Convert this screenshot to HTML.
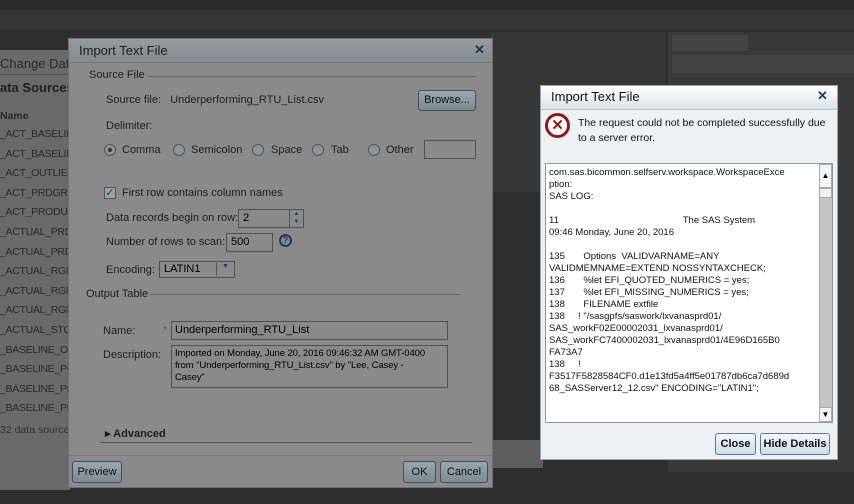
<!DOCTYPE html>
<html><head><style>
*{box-sizing:border-box;margin:0;padding:0}
body{width:854px;height:504px;overflow:hidden;background:#2e2e2e;font-family:"Liberation Sans",sans-serif;position:relative}
.a{position:absolute}
.t{font-size:11px;color:#1e1e1e;white-space:nowrap}
.lt{font-size:10.5px;color:#2a2a2a;white-space:nowrap}
.btn{position:absolute;border:1px solid #3f4f5c;border-radius:3px;background:linear-gradient(#9aa6ae,#7f8b93);font-size:11px;color:#111;text-align:center}
.wbtn{position:absolute;border:1px solid #5d7a94;border-radius:3px;background:linear-gradient(#f4f8fb,#cfdbe5);font-size:11px;font-weight:bold;color:#111;text-align:center}
.radio{position:absolute;width:12px;height:12px;border-radius:50%;border:1px solid #555;background:#8e9499}
.inp{position:absolute;border:1px solid #505050;background:#8a8a8a}
.log{font-size:9.5px;line-height:12px;color:#111;white-space:pre}
</style></head><body>
<div class="a" style="left:0;top:0;width:854px;height:10px;background:#2a2a2a"></div>
<div class="a" style="left:0;top:10px;width:854px;height:20px;background:#353535"></div>
<div class="a" style="left:490px;top:32px;width:175px;height:160px;background:#363636"></div>
<div class="a" style="left:668px;top:32px;width:186px;height:440px;background:#393939"></div>
<div class="a" style="left:672px;top:35px;width:76px;height:16px;background:#444"></div>
<div class="a" style="left:672px;top:55px;width:182px;height:18px;background:#444"></div>
<div class="a" style="left:0;top:50px;width:70px;height:440px;background:#6a6a6a"></div>
<div class="a lt" style="left:0;top:56px;font-size:13px;color:#2a2a2a">Change Data</div>
<div class="a" style="left:0;top:74px;width:70px;height:1px;background:#555"></div>
<div class="a lt" style="left:0;top:80px;font-size:13px;font-weight:bold;color:#222">ata Sources</div>
<div class="a lt" style="left:0;top:110px;font-weight:bold">Name</div>
<div class="a lt" style="left:0;top:125px;line-height:19.6px;letter-spacing:-0.3px">_ACT_BASELIN<br>_ACT_BASELIN<br>_ACT_OUTLIER<br>_ACT_PRDGRF<br>_ACT_PRODUC<br>_ACTUAL_PRD<br>_ACTUAL_PRD<br>_ACTUAL_RGN<br>_ACTUAL_RGN<br>_ACTUAL_RGN<br>_ACTUAL_STO<br>_BASELINE_OU<br>_BASELINE_PO<br>_BASELINE_PR<br>_BASELINE_PR</div>
<div class="a lt" style="left:0;top:424px;color:#333">32 data sources</div>
<div class="a" style="left:493px;top:440px;width:50px;height:28px;background:#5e5e5e"></div>
<!-- main dialog -->
<div class="a" style="left:68px;top:38px;width:425px;height:450px;background:#8a8a8a;border:1px solid #6f6f6f"></div>
<div class="a" style="left:69px;top:39px;width:423px;height:24px;background:linear-gradient(#959a9e,#858a8e);border-bottom:1px solid #70767b"></div>
<div class="a t" style="left:79px;top:43px;font-size:13px">Import Text File</div>
<div class="a" style="left:474px;top:42px;font-size:13px;font-weight:bold;color:#1c3550">✕</div>
<div class="a t" style="left:89px;top:69px">Source File</div>
<div class="a" style="left:148px;top:76px;width:328px;height:1px;background:#666"></div>
<div class="a t" style="left:106px;top:94px">Source file:&nbsp;&nbsp; Underperforming_RTU_List.csv</div>
<div class="btn" style="left:418px;top:90px;width:58px;height:21px;line-height:19px">Browse...</div>
<div class="a t" style="left:106px;top:120px">Delimiter:</div>
<div class="radio" style="left:104px;top:144px"><div style="width:4px;height:4px;border-radius:50%;background:#333;margin:3px"></div></div>
<div class="a t" style="left:122px;top:144px">Comma</div>
<div class="radio" style="left:173px;top:144px"></div><div class="a t" style="left:191px;top:144px">Semicolon</div>
<div class="radio" style="left:252px;top:144px"></div><div class="a t" style="left:271px;top:144px">Space</div>
<div class="radio" style="left:312px;top:144px"></div><div class="a t" style="left:331px;top:144px">Tab</div>
<div class="radio" style="left:368px;top:144px"></div><div class="a t" style="left:386px;top:144px">Other</div>
<div class="inp" style="left:424px;top:140px;width:52px;height:19px"></div>
<div class="a" style="left:104px;top:187px;width:12px;height:12px;border:1px solid #555;background:#9aa0a4;font-size:11px;line-height:10px;color:#1d3d63;text-align:center">✓</div>
<div class="a t" style="left:122px;top:187px">First row contains column names</div>
<div class="a t" style="left:106px;top:212px">Data records begin on row:</div>
<div class="inp" style="left:238px;top:209px;width:66px;height:19px;font-size:11px;padding:2px 4px">2</div>
<div class="a" style="left:289px;top:210px;width:14px;height:17px;border-left:1px solid #555;font-size:6px;color:#1d3d63;text-align:center;line-height:8px">▲<br>▼</div>
<div class="a t" style="left:106px;top:236px">Number of rows to scan:</div>
<div class="inp" style="left:226px;top:233px;width:47px;height:19px;font-size:11px;padding:2px 4px">500</div>
<div class="a" style="left:279px;top:234px;width:13px;height:13px;border-radius:50%;border:2px solid #1d3d63;font-size:9px;font-weight:bold;color:#1d3d63;text-align:center;line-height:9px">?</div>
<div class="a t" style="left:106px;top:264px">Encoding:</div>
<div class="inp" style="left:159px;top:261px;width:76px;height:17px;font-size:11px;padding:1px 4px">LATIN1<span style="position:absolute;left:56px;top:1px;border-left:1px solid #555;padding-left:5px;font-size:7px;color:#1d3d63;height:13px">▼</span></div>
<div class="a t" style="left:86px;top:288px">Output Table</div>
<div class="a" style="left:150px;top:294px;width:310px;height:1px;background:#666"></div>
<div class="a t" style="left:103px;top:325px">Name:</div>
<div class="a" style="left:163px;top:325px;font-size:10px;color:#a33">*</div>
<div class="inp" style="left:171px;top:321px;width:277px;height:19px;font-size:11px;padding:2px 3px">Underperforming_RTU_List</div>
<div class="a t" style="left:103px;top:349px">Description:</div>
<div class="inp" style="left:171px;top:345px;width:277px;height:43px;font-size:9.5px;padding:2px 3px;line-height:12px;white-space:nowrap;overflow:hidden;letter-spacing:-0.1px">Imported on Monday, June 20, 2016 09:46:32 AM GMT-0400<br>from "Underperforming_RTU_List.csv" by "Lee, Casey -<br>Casey"</div>
<div class="a t" style="left:105px;top:427px;font-weight:bold">▸ Advanced</div>
<div class="a" style="left:100px;top:442px;width:372px;height:1px;background:#555"></div>
<div class="a" style="left:69px;top:455px;width:423px;height:1px;background:#7a7a7a"></div>
<div class="btn" style="left:72px;top:461px;width:50px;height:22px;line-height:20px">Preview</div>
<div class="btn" style="left:403px;top:461px;width:33px;height:22px;line-height:20px">OK</div>
<div class="btn" style="left:440px;top:461px;width:48px;height:22px;line-height:20px">Cancel</div>
<!-- error dialog -->
<div class="a" style="left:540px;top:85px;width:298px;height:375px;background:#eef1f4;border:1px solid #9aa4ad"></div>
<div class="a" style="left:541px;top:86px;width:296px;height:24px;background:linear-gradient(#ffffff,#dde2e6);border-bottom:1px solid #b9c1c8"></div>
<div class="a" style="left:551px;top:89px;font-size:13px;color:#111">Import Text File</div>
<div class="a" style="left:817px;top:88px;font-size:13px;font-weight:bold;color:#1c3f6b">✕</div>
<div class="a" style="left:545px;top:113px;width:25px;height:25px;border-radius:50%;border:3px solid #8b1a1a;background:#fff;color:#8b1a1a;font-size:15px;font-weight:bold;text-align:center;line-height:19px">✕</div>
<div class="a" style="left:578px;top:116px;font-size:10.5px;line-height:15px;color:#111">The request could not be completed successfully due<br>to a server error.</div>
<div class="a" style="left:545px;top:163px;width:288px;height:260px;background:#fff;border:1px solid #8d979f"></div>
<div class="a log" style="left:549px;top:167px">com.sas.bicommon.selfserv.workspace.WorkspaceExce
ption:
SAS LOG:

11                                               The SAS System
09:46 Monday, June 20, 2016

135       Options  VALIDVARNAME=ANY
VALIDMEMNAME=EXTEND NOSSYNTAXCHECK;
136       %let EFI_QUOTED_NUMERICS = yes;
137       %let EFI_MISSING_NUMERICS = yes;
138       FILENAME extfile
138     ! "/sasgpfs/saswork/lxvanasprd01/
SAS_workF02E00002031_lxvanasprd01/
SAS_workFC7400002031_lxvanasprd01/4E96D165B0
FA73A7
138     !
F3517F5828584CF0.d1e13fd5a4ff5e01787db6ca7d689d
68_SASServer12_12.csv" ENCODING="LATIN1";</div>
<div class="a" style="left:819px;top:164px;width:13px;height:258px;background:#c4c4c4;border-left:1px solid #aaa"></div>
<div class="a" style="left:819px;top:164px;width:13px;height:24px;background:#f4f4f4;border:1px solid #aaa;font-size:8px;text-align:center;line-height:22px">▲</div>
<div class="a" style="left:819px;top:188px;width:13px;height:10px;background:#f0f0f0;border:1px solid #aaa"></div>
<div class="a" style="left:819px;top:407px;width:13px;height:15px;background:#f4f4f4;border:1px solid #aaa;font-size:8px;text-align:center;line-height:13px">▼</div>
<div class="wbtn" style="left:715px;top:433px;width:41px;height:22px;line-height:20px">Close</div>
<div class="wbtn" style="left:760px;top:433px;width:70px;height:22px;line-height:20px">Hide Details</div>
</body></html>
